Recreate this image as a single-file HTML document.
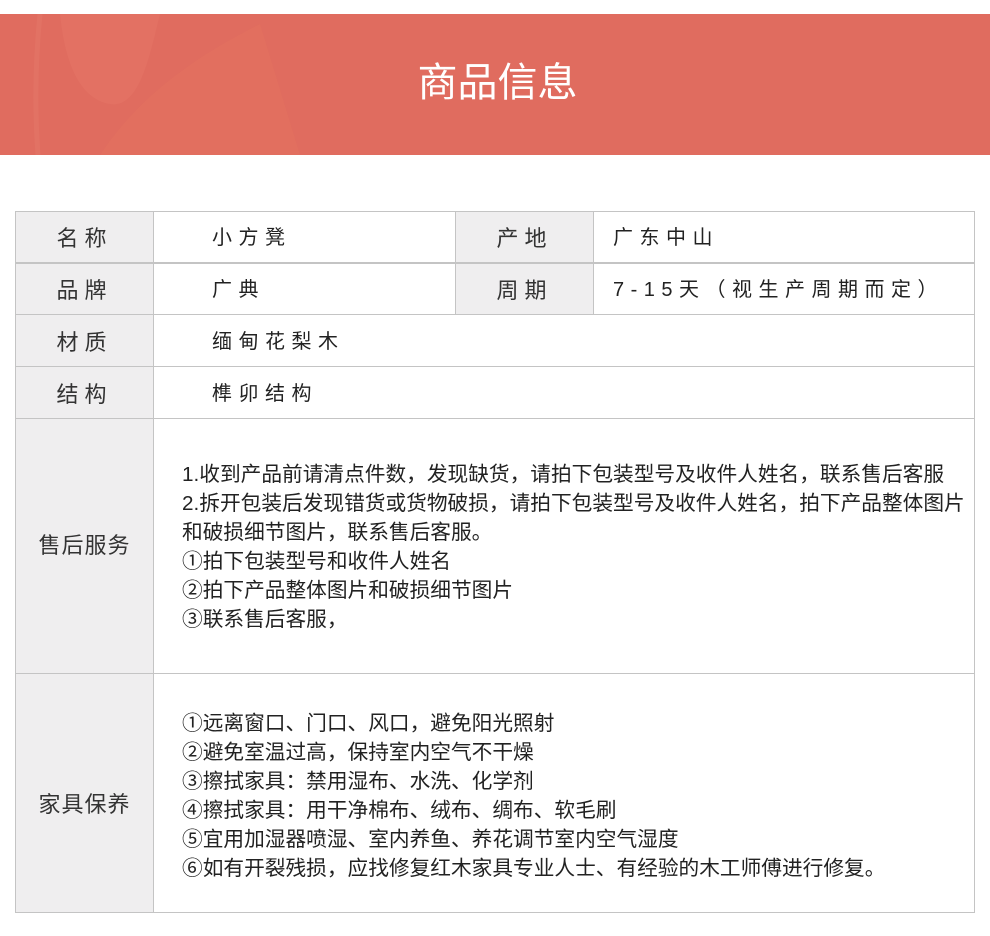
<!DOCTYPE html>
<html><head><meta charset="utf-8"><style>
body{margin:0;width:990px;height:929px;background:#fff;position:relative;overflow:hidden;font-family:"Liberation Sans","Noto Sans CJK SC",sans-serif;color:#222}
.banner{position:absolute;left:0;top:14px;width:990px;height:141px;background:#e06c5f;overflow:hidden}
.banner h1{position:absolute;left:0;right:0;top:44px;margin:0;text-align:center;font-weight:400;font-size:40px;line-height:50px;color:#fff;padding-left:5px}
.c{position:absolute;box-sizing:border-box;border:1px solid #c4c4c4;}
.l{background:#efeeef;text-align:center;font-size:22px;letter-spacing:6px;color:#333}
.v{font-size:20px;letter-spacing:6.5px;color:#222}
.t{font-size:20.7px;line-height:29px;color:#222}
</style></head><body>
<div class="banner">
<svg width="990" height="141" style="position:absolute;left:0;top:0">
<path d="M40 0 C35 50 35 100 38 141" stroke="#e27264" stroke-width="5" fill="none"/>
<path d="M60 0 C65 50 80 85 110 90 C140 95 150 40 160 0" fill="#e47466" opacity=".6"/>
<path d="M100 141 C140 80 200 40 260 10 L300 141 Z" fill="#e3715f" opacity=".6"/>
</svg>
<h1>商品信息</h1>
</div>
<div class="c l" style="left:15px;top:211px;width:139px;height:53px;line-height:53px">名称</div>
<div class="c v" style="left:153px;top:211px;width:303px;height:53px;line-height:53px;padding-left:58px">小方凳</div>
<div class="c l" style="left:455px;top:211px;width:139px;height:53px;line-height:53px">产地</div>
<div class="c v" style="left:593px;top:211px;width:382px;height:53px;line-height:53px;padding-left:19px">广东中山</div>
<div class="c l" style="left:15px;top:262px;width:139px;height:53px;line-height:53px;border-top:2px solid #c4c4c4">品牌</div>
<div class="c v" style="left:153px;top:262px;width:303px;height:53px;line-height:53px;padding-left:58px;border-top:2px solid #c4c4c4">广典</div>
<div class="c l" style="left:455px;top:262px;width:139px;height:53px;line-height:53px;border-top:2px solid #c4c4c4">周期</div>
<div class="c v" style="left:593px;top:262px;width:382px;height:53px;line-height:53px;padding-left:19px;border-top:2px solid #c4c4c4;letter-spacing:6.5px">7-15天（视生产周期而定）</div>
<div class="c l" style="left:15px;top:314px;width:139px;height:53px;line-height:55px">材质</div>
<div class="c v" style="left:153px;top:314px;width:822px;height:53px;line-height:55px;padding-left:58px">缅甸花梨木</div>
<div class="c l" style="left:15px;top:366px;width:139px;height:53px;line-height:55px">结构</div>
<div class="c v" style="left:153px;top:366px;width:822px;height:53px;line-height:55px;padding-left:58px">榫卯结构</div>
<div class="c l" style="left:15px;top:418px;width:139px;height:256px;line-height:254px;letter-spacing:1px">售后服务</div>
<div class="c t" style="left:153px;top:418px;width:822px;height:256px;padding:41px 0 0 28px">1.收到产品前请清点件数，发现缺货，请拍下包装型号及收件人姓名，联系售后客服<br>2.拆开包装后发现错货或货物破损，请拍下包装型号及收件人姓名，拍下产品整体图片<br>和破损细节图片，联系售后客服。<br>①拍下包装型号和收件人姓名<br>②拍下产品整体图片和破损细节图片<br>③联系售后客服，</div>
<div class="c l" style="left:15px;top:673px;width:139px;height:240px;line-height:262px;letter-spacing:1px">家具保养</div>
<div class="c t" style="left:153px;top:673px;width:822px;height:240px;padding:35px 0 0 28px">①远离窗口、门口、风口，避免阳光照射<br>②避免室温过高，保持室内空气不干燥<br>③擦拭家具：禁用湿布、水洗、化学剂<br>④擦拭家具：用干净棉布、绒布、绸布、软毛刷<br>⑤宜用加湿器喷湿、室内养鱼、养花调节室内空气湿度<br>⑥如有开裂残损，应找修复红木家具专业人士、有经验的木工师傅进行修复。</div>
</body></html>
